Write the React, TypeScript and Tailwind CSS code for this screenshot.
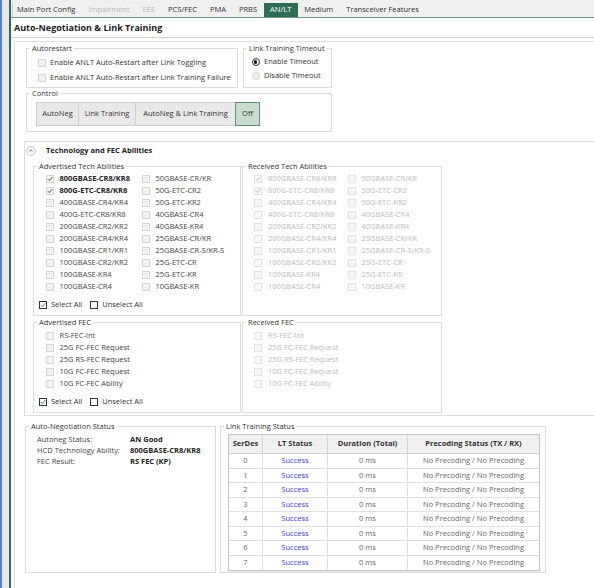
import type { ReactNode } from "react";

type CheckState = "dim" | "faint" | "live";

function Check({ state, checked }: { state: CheckState; checked?: boolean }) {
  const box =
    state === "live"
      ? "bg-white border-[#333]"
      : state === "faint"
      ? "bg-[#f7f7f7] border-[#e3e3e3]"
      : "bg-[#f1f1f1] border-[#d6d6d6]";
  const stroke = state === "live" ? "#2f9a35" : state === "faint" ? "#c2c2c2" : "#555";
  return (
    <span className={`w-[8px] h-[8px] border ${box} flex items-center justify-center shrink-0`}>
      {checked && (
        <svg width="6" height="6" viewBox="0 0 6 6">
          <polyline points="0.8,3.1 2.4,4.7 5.2,1.2" fill="none" stroke={stroke} strokeWidth="1" />
        </svg>
      )}
    </span>
  );
}

function Group({ title, className, children }: { title: string; className?: string; children: ReactNode }) {
  return (
    <fieldset className={`border border-[#dcdcdc] min-w-0 ${className ?? ""}`}>
      <legend className="ml-[3px] px-[2px] text-[7.5px] leading-[9px] text-[#333]">{title}</legend>
      {children}
    </fieldset>
  );
}

const tabs = [
  { name: "Main Port Config" },
  { name: "Impairment", off: true },
  { name: "EEE", off: true },
  { name: "PCS/FEC" },
  { name: "PMA" },
  { name: "PRBS" },
  { name: "AN/LT", active: true },
  { name: "Medium" },
  { name: "Transceiver Features" },
];

const techLeft = [
  "800GBASE-CR8/KR8",
  "800G-ETC-CR8/KR8",
  "400GBASE-CR4/KR4",
  "400G-ETC-CR8/KR8",
  "200GBASE-CR2/KR2",
  "200GBASE-CR4/KR4",
  "100GBASE-CR1/KR1",
  "100GBASE-CR2/KR2",
  "100GBASE-KR4",
  "100GBASE-CR4",
];
const techRight = [
  "50GBASE-CR/KR",
  "50G-ETC-CR2",
  "50G-ETC-KR2",
  "40GBASE-CR4",
  "40GBASE-KR4",
  "25GBASE-CR/KR",
  "25GBASE-CR-S/KR-S",
  "25G-ETC-CR",
  "25G-ETC-KR",
  "10GBASE-KR",
];
const fecItems = ["RS-FEC-Int", "25G FC-FEC Request", "25G RS-FEC Request", "10G FC-FEC Request", "10G FC-FEC Ability"];

function Item({ label, state, checked }: { label: string; state: CheckState; checked?: boolean }) {
  const color = state === "faint" ? "text-[#bcbcbc]" : checked ? "text-[#222] font-bold" : "text-[#444]";
  return (
    <div className="h-[12px] flex items-center gap-[6px]">
      <Check state={state} checked={checked} />
      <span className={`whitespace-nowrap ${color}`}>{label}</span>
    </div>
  );
}

function TechList({ state, col }: { state: CheckState; col: string }) {
  return (
    <div className={`grid ${col}`}>
      {techLeft.map((l, i) => (
        <div key={l} className="contents">
          <Item label={l} state={state} checked={i < 2} />
          <Item label={techRight[i]} state={state} />
        </div>
      ))}
    </div>
  );
}

function SelectRow() {
  return (
    <div className="h-[12px] mt-[6px] flex items-center pl-[5px] text-[#333]">
      <Check state="live" checked />
      <span className="ml-[4px]">Select All</span>
      <span className="ml-[8px]">
        <Check state="live" />
      </span>
      <span className="ml-[4px]">Unselect All</span>
    </div>
  );
}

export default function App() {
  return (
    <div className="w-[594px] h-[588px] overflow-hidden flex bg-white font-['Open_Sans',sans-serif] text-[7.5px] text-[#333]">
      <div className="w-[2px] bg-[#4f86d6]" />
      <div className="w-[7px] bg-[#e7e7e7]" />
      <div className="w-[2px] bg-[#2f6e55]" />
      <div className="flex-1 flex flex-col min-w-0">
        {/* tab strip */}
        <div className="h-[18px] shrink-0 bg-[#f0f0f0] border-b border-[#6d9582] flex items-end pl-[1px]">
          {tabs.map((t, i) => (
            <div
              key={t.name}
              className={`h-[14px] flex items-center whitespace-nowrap ${i === 0 ? "pl-[4px] pr-[6.5px] border-l border-[#cfcfcf]" : "px-[6.5px]"} ${
                t.active ? "bg-[#2f6e55] text-white" : t.off ? "text-[#b9b9b9]" : "text-[#333]"
              }`}
            >
              {t.name}
            </div>
          ))}
        </div>

        <div className="h-[20px] shrink-0 border-b border-[#d2d2d2] flex items-center pl-[3px] text-[9px] font-bold text-[#222]">
          Auto-Negotiation &amp; Link Training
        </div>

        <div className="mt-[3px] ml-[3px] flex-1 border-l border-t border-[#e2e2e2] pl-[11px] pt-[2px]">
          {/* autorestart + timeout */}
          <div className="flex gap-[5px]">
            <Group title="Autorestart" className="w-[212px]">
              <div className="pt-[2px] pb-[1.5px] pl-[11px]">
                {["Enable ANLT Auto-Restart after Link Toggling", "Enable ANLT Auto-Restart after Link Training Failure"].map((l) => (
                  <div key={l} className="h-[15px] flex items-center gap-[4px]">
                    <Check state="dim" />
                    <span className="whitespace-nowrap text-[#333]">{l}</span>
                  </div>
                ))}
              </div>
            </Group>
            <Group title="Link Training Timeout" className="w-[89px]">
              <div className="pt-[2px] pl-[7.5px]">
                <div className="h-[14px] flex items-center gap-[4.5px]">
                  <span className="w-[8px] h-[8px] rounded-full border border-[#333] bg-white flex items-center justify-center">
                    <span className="w-[3.5px] h-[3.5px] rounded-full bg-[#111]" />
                  </span>
                  <span>Enable Timeout</span>
                </div>
                <div className="h-[14px] flex items-center gap-[4.5px]">
                  <span className="w-[8px] h-[8px] rounded-full border border-[#d8d8d8] bg-[#f0f0f0]" />
                  <span>Disable Timeout</span>
                </div>
              </div>
            </Group>
          </div>

          {/* control */}
          <Group title="Control" className="w-[306px] mt-[1.5px]">
            <div className="pt-[3.5px] pb-[5px] pl-[9px] flex">
              {[
                { l: "AutoNeg", w: "w-[43px]" },
                { l: "Link Training", w: "w-[58px]" },
                { l: "AutoNeg & Link Training", w: "w-[101px]" },
              ].map((b) => (
                <div
                  key={b.l}
                  className={`${b.w} h-[24px] -mr-px flex items-center justify-center bg-[#e9e9e9] border border-[#d0d0d0] text-[#333] whitespace-nowrap`}
                >
                  {b.l}
                </div>
              ))}
              <div className="w-[25px] h-[24px] flex items-center justify-center bg-[#c9dccf] border border-[#5f8f74] text-[#333]">
                Off
              </div>
            </div>
          </Group>

          {/* technology and FEC abilities */}
          <div className="mt-[9.5px] -ml-[2px] -mr-[4px] border border-[#dcdcdc] pb-[2px]">
            <div className="h-[17px] flex items-center pl-[1px]">
              <span className="w-[10px] h-[10px] rounded-full border border-[#cdcdcd] bg-[#f5f5f5] flex items-center justify-center">
                <svg width="4" height="3" viewBox="0 0 4 3">
                  <polyline points="0.5,2.4 2,0.8 3.5,2.4" fill="none" stroke="#777" strokeWidth="0.9" />
                </svg>
              </span>
              <span className="ml-[10px] font-bold text-[#222]">Technology and FEC Abilities</span>
            </div>
            <div className="ml-[8px] mt-[3px] grid grid-cols-[208px_200px] gap-x-[1px] gap-y-[1.5px]">
              <Group title="Advertised Tech Abilities">
                <div className="pt-[2px] pb-[4px]">
                  <div className="pl-[11.5px]">
                    <TechList state="dim" col="grid-cols-[96px_1fr]" />
                  </div>
                  <SelectRow />
                </div>
              </Group>
              <Group title="Received Tech Abilities">
                <div className="pt-[2px] pl-[11px]">
                  <TechList state="faint" col="grid-cols-[93.5px_1fr]" />
                </div>
              </Group>
              <Group title="Advertised FEC">
                <div className="pt-[3px] pb-[4.5px]">
                  <div className="pl-[11.5px]">
                    {fecItems.map((f) => (
                      <Item key={f} label={f} state="dim" />
                    ))}
                  </div>
                  <SelectRow />
                </div>
              </Group>
              <Group title="Received FEC">
                <div className="pt-[3px] pl-[11px]">
                  {fecItems.map((f) => (
                    <Item key={f} label={f} state="faint" />
                  ))}
                </div>
              </Group>
            </div>
          </div>

          {/* status */}
          <div className="mt-[6px] -ml-[1px] flex gap-[4px]">
            <Group title="Auto-Negotiation Status" className="w-[191px] h-[151px]">
              <div className="pt-[3px] pl-[11px]">
                {[
                  ["Autoneg Status:", "AN Good"],
                  ["HCD Technology Ability:", "800GBASE-CR8/KR8"],
                  ["FEC Result:", "RS FEC (KP)"],
                ].map(([k, v]) => (
                  <div key={k} className="h-[11px] flex items-center">
                    <span className="w-[93px] text-[#444]">{k}</span>
                    <span className="font-bold text-[#222]">{v}</span>
                  </div>
                ))}
              </div>
            </Group>
            <Group title="Link Training Status" className="w-[326px] h-[151px]">
              <div className="pt-[3px] pl-[7px]">
                <div className="w-[312px] border border-[#c6c6c6] shadow-[0_1px_1px_rgba(0,0,0,0.08)]">
                  <div className="grid grid-cols-[34px_65px_80px_131px] h-[19px] bg-[#f0f0f0] border-b border-[#d4d4d4] font-bold text-[#333]">
                    {["SerDes", "LT Status", "Duration (Total)", "Precoding Status (TX / RX)"].map((h, i) => (
                      <div key={h} className={`flex items-center justify-center whitespace-nowrap ${i < 3 ? "border-r border-[#d4d4d4]" : ""}`}>
                        {h}
                      </div>
                    ))}
                  </div>
                  {[0, 1, 2, 3, 4, 5, 6, 7].map((n) => (
                    <div
                      key={n}
                      className={`grid grid-cols-[34px_65px_80px_131px] h-[14.5px] text-[#666] ${n < 7 ? "border-b border-[#e0e0e0]" : ""}`}
                    >
                      <div className="flex items-center justify-center border-r border-[#e0e0e0]">{n}</div>
                      <div className="flex items-center justify-center border-r border-[#e0e0e0] text-[#3d3de0]">Success</div>
                      <div className="flex items-center justify-center border-r border-[#e0e0e0]">0 ms</div>
                      <div className="flex items-center justify-center whitespace-nowrap">No Precoding / No Precoding</div>
                    </div>
                  ))}
                </div>
              </div>
            </Group>
          </div>
        </div>
      </div>
    </div>
  );
}
